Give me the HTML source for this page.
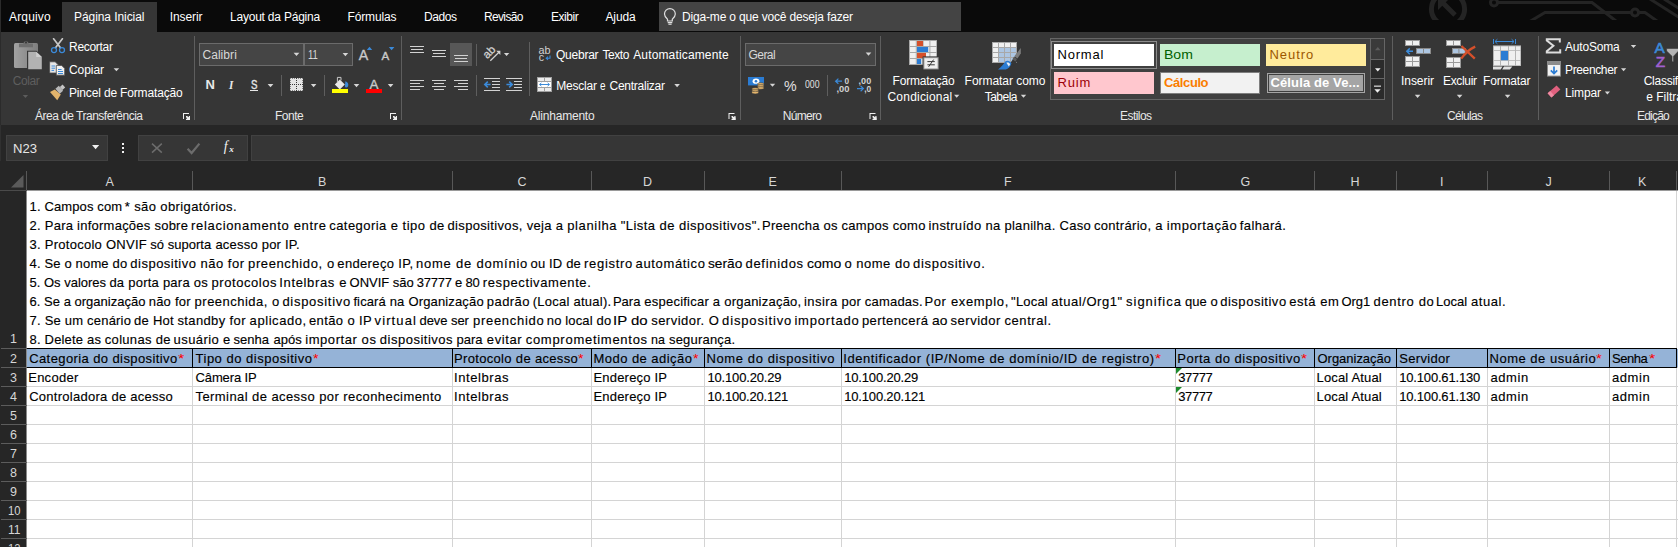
<!DOCTYPE html>
<html lang="pt-BR"><head><meta charset="utf-8"><title>Excel</title>
<style>
html,body{margin:0;padding:0;}
body{width:1678px;height:547px;overflow:hidden;position:relative;background:#262626;font-family:"Liberation Sans", sans-serif;}
.b{position:absolute;box-sizing:border-box;}
.t{position:absolute;white-space:pre;line-height:20px;height:20px;font-family:"Liberation Sans", sans-serif;}
.i{position:absolute;overflow:visible;}
</style></head><body>
<!-- backgrounds -->
<div class="b" style="left:0px;top:0px;width:1678px;height:32px;background:#0a0a0a;"></div>
<div class="b" style="left:62px;top:2px;width:95px;height:30px;background:#363636;"></div>
<div class="b" style="left:659px;top:2px;width:302px;height:29px;background:#444444;"></div>
<div class="b" style="left:0px;top:32px;width:1678px;height:93px;background:#363636;"></div>
<div class="b" style="left:0px;top:0px;width:1px;height:125px;background:#2b2b2b;"></div>
<div class="b" style="left:0px;top:125px;width:1678px;height:66px;background:#262626;"></div>
<div class="b" style="left:194px;top:36px;width:1px;height:84px;background:#5e5e5e;"></div>
<div class="b" style="left:401px;top:36px;width:1px;height:84px;background:#5e5e5e;"></div>
<div class="b" style="left:740px;top:36px;width:1px;height:84px;background:#5e5e5e;"></div>
<div class="b" style="left:880px;top:36px;width:1px;height:84px;background:#5e5e5e;"></div>
<div class="b" style="left:1392px;top:36px;width:1px;height:84px;background:#5e5e5e;"></div>
<div class="b" style="left:1538px;top:36px;width:1px;height:84px;background:#5e5e5e;"></div>
<div class="b" style="left:281px;top:75px;width:1px;height:21px;background:#5e5e5e;"></div>
<div class="b" style="left:324px;top:75px;width:1px;height:21px;background:#5e5e5e;"></div>
<div class="b" style="left:476px;top:44px;width:1px;height:22px;background:#5e5e5e;"></div>
<div class="b" style="left:476px;top:75px;width:1px;height:21px;background:#5e5e5e;"></div>
<div class="b" style="left:529px;top:42px;width:1px;height:54px;background:#5e5e5e;"></div>
<div class="b" style="left:827px;top:75px;width:1px;height:21px;background:#5e5e5e;"></div>
<div class="b" style="left:199px;top:43px;width:105px;height:23px;background:#454545;border:1px solid #6b6b6b;"></div>
<div class="b" style="left:304px;top:43px;width:49px;height:23px;background:#454545;border:1px solid #6b6b6b;"></div>
<div class="b" style="left:745px;top:43px;width:131px;height:23px;background:#454545;border:1px solid #6b6b6b;"></div>
<div class="b" style="left:450px;top:43px;width:22px;height:23px;background:#575757;"></div>
<div class="b" style="left:1050px;top:38px;width:335px;height:62px;background:#404040;border:1px solid #666666;"></div>
<div class="b" style="left:1370px;top:38px;width:15px;height:62px;background:#3a3a3a;border:1px solid #666666;"></div>
<div class="b" style="left:1371px;top:60px;width:13px;height:18px;background:#2b2b2b;"></div>
<div class="b" style="left:1371px;top:79px;width:13px;height:20px;background:#2b2b2b;"></div>
<div class="b" style="left:1370px;top:59px;width:15px;height:1px;background:#666666;"></div>
<div class="b" style="left:1370px;top:78px;width:15px;height:1px;background:#666666;"></div>
<div class="b" style="left:1051px;top:41px;width:106px;height:28px;border:1px solid #8c8c8c;"></div>
<div class="b" style="left:1054px;top:44px;width:100px;height:22px;background:#ffffff;"></div>
<div class="b" style="left:1160px;top:44px;width:100px;height:22px;background:#c6efce;"></div>
<div class="b" style="left:1266px;top:44px;width:100px;height:22px;background:#ffeb9c;"></div>
<div class="b" style="left:1054px;top:72px;width:100px;height:22px;background:#ffc7ce;"></div>
<div class="b" style="left:1160px;top:72px;width:100px;height:22px;background:#f2f2f2;border:1px solid #7f7f7f;"></div>
<div class="b" style="left:1266px;top:72px;width:100px;height:22px;background:#a5a5a5;border:3px double #3f3f3f;"></div>
<div class="b" style="left:0px;top:125px;width:1px;height:36px;background:#303030;"></div>
<div class="b" style="left:6px;top:135px;width:102px;height:26px;background:#363636;border:1px solid #414141;"></div>
<div class="b" style="left:138px;top:135px;width:110px;height:26px;background:#363636;border:1px solid #414141;"></div>
<div class="b" style="left:251px;top:135px;width:1429px;height:26px;background:#363636;border:1px solid #414141;"></div>
<div class="b" style="left:27px;top:191px;width:1651px;height:356px;background:#ffffff;"></div>
<div class="b" style="left:0px;top:190px;width:1678px;height:1px;background:#9a9a9a;"></div>
<div class="b" style="left:0px;top:190px;width:27px;height:1px;background:#4a4a4a;"></div>
<div class="b" style="left:26px;top:171px;width:1px;height:19px;background:#585858;"></div>
<div class="b" style="left:192px;top:171px;width:1px;height:19px;background:#585858;"></div>
<div class="b" style="left:452px;top:171px;width:1px;height:19px;background:#585858;"></div>
<div class="b" style="left:591px;top:171px;width:1px;height:19px;background:#585858;"></div>
<div class="b" style="left:704px;top:171px;width:1px;height:19px;background:#585858;"></div>
<div class="b" style="left:841px;top:171px;width:1px;height:19px;background:#585858;"></div>
<div class="b" style="left:1175px;top:171px;width:1px;height:19px;background:#585858;"></div>
<div class="b" style="left:1314px;top:171px;width:1px;height:19px;background:#585858;"></div>
<div class="b" style="left:1396px;top:171px;width:1px;height:19px;background:#585858;"></div>
<div class="b" style="left:1487px;top:171px;width:1px;height:19px;background:#585858;"></div>
<div class="b" style="left:1609px;top:171px;width:1px;height:19px;background:#585858;"></div>
<div class="b" style="left:1676px;top:171px;width:1px;height:19px;background:#585858;"></div>
<div class="b" style="left:0px;top:191px;width:26px;height:356px;background:#262626;"></div>
<div class="b" style="left:26px;top:191px;width:1px;height:356px;background:#8a8a8a;"></div>
<div class="b" style="left:1px;top:348px;width:26px;height:1px;background:#5c5c5c;"></div>
<div class="b" style="left:1px;top:367px;width:26px;height:1px;background:#5c5c5c;"></div>
<div class="b" style="left:1px;top:386px;width:26px;height:1px;background:#5c5c5c;"></div>
<div class="b" style="left:1px;top:405px;width:26px;height:1px;background:#5c5c5c;"></div>
<div class="b" style="left:1px;top:424px;width:26px;height:1px;background:#5c5c5c;"></div>
<div class="b" style="left:1px;top:443px;width:26px;height:1px;background:#5c5c5c;"></div>
<div class="b" style="left:1px;top:462px;width:26px;height:1px;background:#5c5c5c;"></div>
<div class="b" style="left:1px;top:481px;width:26px;height:1px;background:#5c5c5c;"></div>
<div class="b" style="left:1px;top:500px;width:26px;height:1px;background:#5c5c5c;"></div>
<div class="b" style="left:1px;top:519px;width:26px;height:1px;background:#5c5c5c;"></div>
<div class="b" style="left:1px;top:538px;width:26px;height:1px;background:#5c5c5c;"></div>
<div class="b" style="left:27px;top:367px;width:1651px;height:1px;background:#d4d4d4;"></div>
<div class="b" style="left:27px;top:386px;width:1651px;height:1px;background:#d4d4d4;"></div>
<div class="b" style="left:27px;top:405px;width:1651px;height:1px;background:#d4d4d4;"></div>
<div class="b" style="left:27px;top:424px;width:1651px;height:1px;background:#d4d4d4;"></div>
<div class="b" style="left:27px;top:443px;width:1651px;height:1px;background:#d4d4d4;"></div>
<div class="b" style="left:27px;top:462px;width:1651px;height:1px;background:#d4d4d4;"></div>
<div class="b" style="left:27px;top:481px;width:1651px;height:1px;background:#d4d4d4;"></div>
<div class="b" style="left:27px;top:500px;width:1651px;height:1px;background:#d4d4d4;"></div>
<div class="b" style="left:27px;top:519px;width:1651px;height:1px;background:#d4d4d4;"></div>
<div class="b" style="left:27px;top:538px;width:1651px;height:1px;background:#d4d4d4;"></div>
<div class="b" style="left:192px;top:368px;width:1px;height:179px;background:#d4d4d4;"></div>
<div class="b" style="left:452px;top:368px;width:1px;height:179px;background:#d4d4d4;"></div>
<div class="b" style="left:591px;top:368px;width:1px;height:179px;background:#d4d4d4;"></div>
<div class="b" style="left:704px;top:368px;width:1px;height:179px;background:#d4d4d4;"></div>
<div class="b" style="left:841px;top:368px;width:1px;height:179px;background:#d4d4d4;"></div>
<div class="b" style="left:1175px;top:368px;width:1px;height:179px;background:#d4d4d4;"></div>
<div class="b" style="left:1314px;top:368px;width:1px;height:179px;background:#d4d4d4;"></div>
<div class="b" style="left:1396px;top:368px;width:1px;height:179px;background:#d4d4d4;"></div>
<div class="b" style="left:1487px;top:368px;width:1px;height:179px;background:#d4d4d4;"></div>
<div class="b" style="left:1609px;top:368px;width:1px;height:179px;background:#d4d4d4;"></div>
<div class="b" style="left:1676px;top:368px;width:1px;height:179px;background:#d4d4d4;"></div>
<div class="b" style="left:1676px;top:191px;width:1px;height:157px;background:#d4d4d4;"></div>
<div class="b" style="left:27px;top:348px;width:1650px;height:20px;background:#000000;"></div>
<div class="b" style="left:27px;top:349px;width:165px;height:18px;background:#95b3d7;"></div>
<div class="b" style="left:193px;top:349px;width:259px;height:18px;background:#95b3d7;"></div>
<div class="b" style="left:453px;top:349px;width:138px;height:18px;background:#95b3d7;"></div>
<div class="b" style="left:592px;top:349px;width:112px;height:18px;background:#95b3d7;"></div>
<div class="b" style="left:705px;top:349px;width:136px;height:18px;background:#95b3d7;"></div>
<div class="b" style="left:842px;top:349px;width:333px;height:18px;background:#95b3d7;"></div>
<div class="b" style="left:1176px;top:349px;width:138px;height:18px;background:#95b3d7;"></div>
<div class="b" style="left:1315px;top:349px;width:81px;height:18px;background:#95b3d7;"></div>
<div class="b" style="left:1397px;top:349px;width:90px;height:18px;background:#95b3d7;"></div>
<div class="b" style="left:1488px;top:349px;width:121px;height:18px;background:#95b3d7;"></div>
<div class="b" style="left:1610px;top:349px;width:66px;height:18px;background:#95b3d7;"></div>
<div class="b" style="left:1677px;top:349px;width:1px;height:18px;background:#95b3d7;"></div>
<!-- icons -->
<svg class="i" style="left:0;top:0" width="1678" height="547" viewBox="0 0 1678 547">
<path d="M1176 368h6l-6 6z" fill="#1c8a2c" />
<path d="M1176 387h6l-6 6z" fill="#1c8a2c" />
<path d="M23.5 175v12.5h-12.5z" fill="#5a5a5a" />
<defs><clipPath id="tb"><rect x="1400" y="0" width="278" height="20"/></clipPath></defs>
<g clip-path="url(#tb)" fill="none" stroke="#242424" stroke-width="3"><circle cx="1448" cy="9" r="16.6" stroke-width="5"/><path d="M1455 15L1442 2" stroke-width="5"/><path d="M1438 -2h12l-12 12z" fill="#242424" stroke="none"/><circle cx="1494" cy="2.5" r="3.5"/><path d="M1498 2.5H1592L1616 21"/><path d="M1529 22L1545 12.5H1631"/><circle cx="1635" cy="12.5" r="3.5"/><path d="M1639 12.5H1645L1657 21"/><path d="M1650 -1L1680 18"/><path d="M1664 -1L1680 9"/></g>
<g fill="none" stroke="#e0e0e0" stroke-width="1.2"><path d="M667.5 19.2c-2-1.6-3-3-3-5.2a5.4 5.4 0 0 1 10.8 0c0 2.2-1 3.6-3 5.2v1.8h-4.8z"/><path d="M667.7 22.6h4.6"/><path d="M668.4 24.2h3.2"/></g>
<defs><linearGradient id="pg" x1="0" x2="1"><stop offset="0" stop-color="#a2a2a2"/><stop offset="1" stop-color="#7e7e7e"/></linearGradient></defs>
<rect x="14" y="43" width="24" height="25" rx="1.5" fill="url(#pg)"/>
<path d="M19 47.2v-3.2q0-0.6 0.6-0.6h3.6a2.9 2.9 0 0 1 5.6 0h3.6q0.6 0 0.6 0.6v3.2z" fill="#6e6e6e"/><circle cx="26" cy="42.6" r="1" fill="#363636"/>
<path d="M27 50.7h9.5l6.5 6v13.7h-16z" fill="#363636"/>
<path d="M28.2 51.8h8l5.6 5.2v12.3h-13.6z" fill="#b2b2b2"/><path d="M36.2 51.8v5.2h5.6z" fill="#cfcfcf"/>
<path d="M22.7 95h5.4l-2.7 3z" fill="#5c5c5c"/>
<g fill="none" stroke="#c8c8c8" stroke-width="1.7" stroke-linecap="round"><path d="M53.6 38.8L60.3 47.6"/><path d="M62.4 38.8L55.7 47.6"/></g>
<g fill="none" stroke="#3b8ad9" stroke-width="1.3"><circle cx="54" cy="50.1" r="2.5"/><circle cx="62" cy="50.1" r="2.5"/></g>
<path d="M49.6 61.8h5.6l3 3v8.2h-8.6z" fill="#e6e6e6" stroke="#4a4a4a" stroke-width="0.8"/>
<path d="M51.5 66h3.6M51.5 68.2h3.6M51.5 70.4h2.6" stroke="#3b8ad9" stroke-width="1"/>
<path d="M56.3 65.4h5.4l3 3v6.8h-8.4z" fill="#f0f0f0" stroke="#4a4a4a" stroke-width="0.8"/>
<path d="M58 69.5h3.6M58 71.5h5M58 73.5h5" stroke="#3b8ad9" stroke-width="1"/>
<path d="M113.6 68.2h5.6l-2.8 3z" fill="#d6d6d6"/>
<g transform="translate(0 1.3)"><path d="M50 90.6l4.8-2.4 6 5-3.6 5.8z" fill="#e2b46c"/><path d="M55.4 87.4l3.4-2.9 4.3 5-3.4 2.9z" fill="#b8b8b8"/><path d="M59.8 85.6l2.8-2.4 2.6 3-2.8 2.4z" fill="#c4c4c4"/></g>
<path d="M183 119v-6h6v1h-5v5z" fill="#f0f0f0"/><path d="M186 116h1.2l1.6 1.6v-1.6h1.2v4h-4v-1.2h1.6l-1.6-1.6z" fill="#f0f0f0"/><rect x="187.2" y="117.4" width="2.8" height="2.6" fill="#f0f0f0"/>
<path d="M390 119v-6h6v1h-5v5z" fill="#f0f0f0"/><path d="M393 116h1.2l1.6 1.6v-1.6h1.2v4h-4v-1.2h1.6l-1.6-1.6z" fill="#f0f0f0"/><rect x="394.2" y="117.4" width="2.8" height="2.6" fill="#f0f0f0"/>
<path d="M728.5 119v-6h6v1h-5v5z" fill="#f0f0f0"/><path d="M731.5 116h1.2l1.6 1.6v-1.6h1.2v4h-4v-1.2h1.6l-1.6-1.6z" fill="#f0f0f0"/><rect x="732.7" y="117.4" width="2.8" height="2.6" fill="#f0f0f0"/>
<path d="M869.5 119v-6h6v1h-5v5z" fill="#f0f0f0"/><path d="M872.5 116h1.2l1.6 1.6v-1.6h1.2v4h-4v-1.2h1.6l-1.6-1.6z" fill="#f0f0f0"/><rect x="873.7" y="117.4" width="2.8" height="2.6" fill="#f0f0f0"/>
<path d="M293.6 52.8h5.8l-2.9 3.2z" fill="#d6d6d6"/>
<path d="M342.6 53h5.6l-2.8 3.2z" fill="#d6d6d6"/>
<text x="358.7" y="60" font-family='Liberation Sans, sans-serif' font-size="14.2" fill="#cacaca" stroke="#cacaca" stroke-width="0.35">A</text>
<path d="M366.8 50h5.4l-2.7-3.2z" fill="#3b8ad9"/>
<text x="381.6" y="60" font-family='Liberation Sans, sans-serif' font-size="11.6" fill="#cacaca" stroke="#cacaca" stroke-width="0.35">A</text>
<path d="M388.8 47h5.6l-2.8 3.2z" fill="#3b8ad9"/>
<rect x="250" y="90" width="8" height="1" fill="#e8e8e8" />
<path d="M267.6 84h5.8l-2.9 3.2z" fill="#d6d6d6"/>
<rect x="290" y="78" width="13" height="13" fill="#e4e4e4" />
<path d="M296.5 78v13M290 84.5h13" stroke="#363636" stroke-width="1" stroke-dasharray="1 1"/>
<path d="M290.5 78v13M302.5 78v13M290 78.5h13M290 90.5h13" stroke="#363636" stroke-width="1" stroke-dasharray="1 1" opacity=".55"/>
<path d="M310.8 84h5.6l-2.8 3.2z" fill="#d6d6d6"/>
<path d="M339.8 79.4l5 5-5 5-5-5z" fill="#e8e8e8"/>
<path d="M337.4 82.6v-5.2h3.6v3" fill="none" stroke="#c8c8c8" stroke-width="1"/>
<path d="M345.4 81.2c2.2 0.6 3.4 2.6 2.8 4.6-0.3 1.2-1.2 1.8-2.2 1.6-0.9-0.2-1.3-1-1-2z" fill="#3b8ad9"/>
<rect x="332" y="89" width="16" height="4" fill="#ffff00" />
<path d="M353.7 84h5.6l-2.8 3.2z" fill="#d6d6d6"/>
<text x="369.4" y="88.6" font-family='Liberation Sans, sans-serif' font-size="13.4" fill="#cacaca" stroke="#cacaca" stroke-width="0.35">A</text>
<rect x="366" y="89" width="16" height="4" fill="#ff0000" />
<path d="M387.8 84h5.6l-2.8 3.2z" fill="#d6d6d6"/>
<rect x="410" y="46" width="14" height="1" fill="#d2d2d2" />
<rect x="411.0" y="49" width="12" height="1" fill="#d2d2d2" />
<rect x="410" y="52" width="14" height="1" fill="#d2d2d2" />
<rect x="432" y="50" width="14" height="1" fill="#d2d2d2" />
<rect x="433.0" y="53" width="12" height="1" fill="#d2d2d2" />
<rect x="432" y="56" width="14" height="1" fill="#d2d2d2" />
<rect x="454" y="55" width="14" height="1" fill="#d2d2d2" />
<rect x="455.0" y="58" width="12" height="1" fill="#d2d2d2" />
<rect x="454" y="61" width="14" height="1" fill="#d2d2d2" />
<rect x="410" y="80" width="14" height="1" fill="#d2d2d2" />
<rect x="410" y="83" width="10" height="1" fill="#d2d2d2" />
<rect x="410" y="86" width="14" height="1" fill="#d2d2d2" />
<rect x="410" y="89" width="10" height="1" fill="#d2d2d2" />
<rect x="432" y="80" width="14" height="1" fill="#d2d2d2" />
<rect x="434.0" y="83" width="10" height="1" fill="#d2d2d2" />
<rect x="432" y="86" width="14" height="1" fill="#d2d2d2" />
<rect x="434.0" y="89" width="10" height="1" fill="#d2d2d2" />
<rect x="454" y="80" width="14" height="1" fill="#d2d2d2" />
<rect x="458" y="83" width="10" height="1" fill="#d2d2d2" />
<rect x="454" y="86" width="14" height="1" fill="#d2d2d2" />
<rect x="458" y="89" width="10" height="1" fill="#d2d2d2" />
<text transform="translate(487.2 59.2) rotate(-45)" font-family='Liberation Sans, sans-serif' font-size="11.4" fill="#d2d2d2" stroke="#d2d2d2" stroke-width="0.3">ab</text>
<path d="M490.3 60.8L499.2 52" stroke="#d2d2d2" stroke-width="1.2"/><path d="M500.4 50.8v4.2l-4.2-4.2z" fill="#d2d2d2"/>
<path d="M503.9 53h5.4l-2.7 3z" fill="#d6d6d6"/>
<rect x="484" y="78" width="16" height="1" fill="#d2d2d2" />
<rect x="484" y="90" width="16" height="1" fill="#d2d2d2" />
<rect x="492" y="81" width="8" height="1" fill="#d2d2d2" />
<rect x="492" y="84" width="8" height="1" fill="#d2d2d2" />
<rect x="492" y="87" width="8" height="1" fill="#d2d2d2" />
<path d="M490.6 84.5h-5.4M487.8 81.6l-3 2.9 3 2.9" fill="none" stroke="#3b8ad9" stroke-width="1.6"/>
<rect x="506" y="78" width="16" height="1" fill="#d2d2d2" />
<rect x="506" y="90" width="16" height="1" fill="#d2d2d2" />
<rect x="514" y="81" width="8" height="1" fill="#d2d2d2" />
<rect x="514" y="84" width="8" height="1" fill="#d2d2d2" />
<rect x="514" y="87" width="8" height="1" fill="#d2d2d2" />
<path d="M506.4 84.5h5.4M509.2 81.6l3 2.9-3 2.9" fill="none" stroke="#3b8ad9" stroke-width="1.6"/>
<text x="538.6" y="53.6" font-family='Liberation Sans, sans-serif' font-size="10.6" fill="#d2d2d2" textLength="12" lengthAdjust="spacingAndGlyphs">ab</text>
<text x="538.8" y="60.8" font-family='Liberation Sans, sans-serif' font-size="10.6" fill="#d2d2d2">c</text>
<path d="M550 55.6v2.6h-3.6M548 56.6l-1.8 1.6 1.8 1.6" fill="none" stroke="#3b8ad9" stroke-width="1.1"/>
<rect x="537" y="77" width="15" height="15" fill="#a0a0a0" />
<rect x="538" y="78" width="6" height="3" fill="#ececec" />
<rect x="545" y="78" width="6" height="3" fill="#ececec" />
<rect x="538" y="88" width="6" height="3" fill="#ececec" />
<rect x="545" y="88" width="6" height="3" fill="#ececec" />
<rect x="538" y="82" width="13" height="5" fill="#ffffff" />
<path d="M539.6 84.5h9.8M541.4 82.9l-1.8 1.6 1.8 1.6M547.6 82.9l1.8 1.6-1.8 1.6" fill="none" stroke="#3b8ad9" stroke-width="1"/>
<path d="M674.3 84h5.6l-2.8 3.2z" fill="#d6d6d6"/>
<path d="M865.7 52.6h5.6l-2.8 3.2z" fill="#d6d6d6"/>
<rect x="748" y="77" width="16" height="8.4" fill="#2b7cd3" />
<ellipse cx="756" cy="81.2" rx="3.4" ry="2.6" fill="#ffffff"/><circle cx="756" cy="81.2" r="1.3" fill="#2b7cd3"/>
<ellipse cx="760.8" cy="84" rx="3.4" ry="1.3" fill="#e2b46c" stroke="#363636" stroke-width="0.5"/>
<ellipse cx="760.8" cy="86" rx="3.4" ry="1.3" fill="#e2b46c" stroke="#363636" stroke-width="0.5"/>
<ellipse cx="760.8" cy="88" rx="3.4" ry="1.3" fill="#e2b46c" stroke="#363636" stroke-width="0.5"/>
<ellipse cx="755.2" cy="89" rx="3.4" ry="1.3" fill="#e2b46c" stroke="#363636" stroke-width="0.5"/>
<ellipse cx="755.2" cy="91" rx="3.4" ry="1.3" fill="#e2b46c" stroke="#363636" stroke-width="0.5"/>
<ellipse cx="755.2" cy="92.6" rx="3.4" ry="1.3" fill="#e2b46c" stroke="#363636" stroke-width="0.5"/>
<path d="M769.8 83.8h5.4l-2.7 3z" fill="#d6d6d6"/>
<path d="M842 81.2h-6M838.4 78.6l-2.8 2.6 2.8 2.6" fill="none" stroke="#3b8ad9" stroke-width="1.2"/>
<text x="844.6" y="83.8" font-family='Liberation Sans, sans-serif' font-size="9" font-weight="bold" fill="#d2d2d2" textLength="4.6" lengthAdjust="spacingAndGlyphs">0</text>
<text x="836.4" y="92" font-family='Liberation Sans, sans-serif' font-size="9" font-weight="bold" fill="#d2d2d2" textLength="13" lengthAdjust="spacingAndGlyphs">,00</text>
<text x="858.6" y="83.8" font-family='Liberation Sans, sans-serif' font-size="9" font-weight="bold" fill="#d2d2d2" textLength="12.6" lengthAdjust="spacingAndGlyphs">,00</text>
<path d="M857 88.6h6M860.6 86l2.8 2.6-2.8 2.6" fill="none" stroke="#3b8ad9" stroke-width="1.2"/>
<text x="864.2" y="92" font-family='Liberation Sans, sans-serif' font-size="9" font-weight="bold" fill="#d2d2d2" textLength="7" lengthAdjust="spacingAndGlyphs">,0</text>
<rect x="909" y="40" width="28" height="25" fill="#a8a8a8" />
<rect x="910.0" y="41" width="5.8" height="5" fill="#f0f0f0" />
<rect x="916.8" y="41" width="5.8" height="5" fill="#f0f0f0" />
<rect x="923.6" y="41" width="5.8" height="5" fill="#f0f0f0" />
<rect x="930.4" y="41" width="5.8" height="5" fill="#f0f0f0" />
<rect x="910.0" y="47" width="5.8" height="5" fill="#f0f0f0" />
<rect x="916.8" y="47" width="5.8" height="5" fill="#f0f0f0" />
<rect x="923.6" y="47" width="5.8" height="5" fill="#f0f0f0" />
<rect x="930.4" y="47" width="5.8" height="5" fill="#f0f0f0" />
<rect x="910.0" y="53" width="5.8" height="5" fill="#f0f0f0" />
<rect x="916.8" y="53" width="5.8" height="5" fill="#f0f0f0" />
<rect x="923.6" y="53" width="5.8" height="5" fill="#f0f0f0" />
<rect x="930.4" y="53" width="5.8" height="5" fill="#f0f0f0" />
<rect x="910.0" y="59" width="5.8" height="5" fill="#f0f0f0" />
<rect x="916.8" y="59" width="5.8" height="5" fill="#f0f0f0" />
<rect x="923.6" y="59" width="5.8" height="5" fill="#f0f0f0" />
<rect x="930.4" y="59" width="5.8" height="5" fill="#f0f0f0" />
<rect x="917" y="41" width="6" height="5" fill="#d5502b" />
<rect x="917" y="47" width="11.2" height="5" fill="#2b7cd3" />
<rect x="917" y="53" width="9" height="5" fill="#d5502b" />
<rect x="917" y="59" width="4.2" height="5" fill="#2b7cd3" />
<rect x="922.6" y="56.4" width="16.8" height="13.8" fill="#363636" />
<rect x="923.4" y="57.2" width="15.2" height="12.2" fill="#9a9a9a" />
<rect x="924.4" y="58.2" width="13.2" height="10.2" fill="#efefef" />
<path d="M927.4 61.6h7.4M927.4 64.8h7.4M933.6 59.6l-5 7.2" stroke="#3a3a3a" stroke-width="1" fill="none"/>
<path d="M954 94.8h5.4l-2.7 3z" fill="#d6d6d6"/>
<rect x="992" y="42" width="25" height="21" fill="#a8a8a8" />
<rect x="993" y="43" width="5" height="4" fill="#f0f0f0" />
<rect x="999" y="43" width="5" height="4" fill="#f0f0f0" />
<rect x="1005" y="43" width="5" height="4" fill="#f0f0f0" />
<rect x="1011" y="43" width="5" height="4" fill="#f0f0f0" />
<rect x="993" y="48" width="5" height="4" fill="#f0f0f0" />
<rect x="999" y="48" width="5" height="4" fill="#adc6e2" />
<rect x="1005" y="48" width="5" height="4" fill="#adc6e2" />
<rect x="1011" y="48" width="5" height="4" fill="#adc6e2" />
<rect x="993" y="53" width="5" height="4" fill="#f0f0f0" />
<rect x="999" y="53" width="5" height="4" fill="#adc6e2" />
<rect x="1005" y="53" width="5" height="4" fill="#adc6e2" />
<rect x="1011" y="53" width="5" height="4" fill="#adc6e2" />
<rect x="993" y="58" width="5" height="4" fill="#f0f0f0" />
<rect x="999" y="58" width="5" height="4" fill="#adc6e2" />
<rect x="1005" y="58" width="5" height="4" fill="#adc6e2" />
<rect x="1011" y="58" width="5" height="4" fill="#adc6e2" />
<path d="M1010 63.6l8.4-12.4 3 -3.6v6l-6.6 12z" fill="#363636"/>
<path d="M1020.8 48v5.4l-3.4 5-3-2.2z" fill="#7c7c7c"/><path d="M1014 56.8l3 2.2-1.6 2.4-3-2.2z" fill="#5c5c5c"/>
<path d="M998 69.6c3-2.6 5.4-5.2 7.2-8.2 2.4-1.4 5.2-0.4 6.2 2-1 3.2-3.2 5.4-5.6 6.2z" fill="#2b7cd3"/><path d="M1006.4 62.8c1.6-0.6 3 0 3.8 1.4l-1.4 2.2z" fill="#e8eef6"/>
<path d="M1020.8 94.8h5.4l-2.7 3z" fill="#d6d6d6"/>
<path d="M1375 50.2h5.6l-2.8-3.2z" fill="#5c5c5c"/>
<path d="M1375 68.2h5.6l-2.8 3.2z" fill="#f0f0f0"/>
<rect x="1374" y="85.6" width="7" height="1.1" fill="#f0f0f0" />
<path d="M1374.4 89.2h6.2l-3.1 3.5z" fill="#f0f0f0"/>
<rect x="1405" y="40" width="15" height="6" fill="#9a9a9a" />
<rect x="1406" y="41" width="6" height="4" fill="#f0f0f0" />
<rect x="1413" y="41" width="6" height="4" fill="#f0f0f0" />
<rect x="1416" y="48" width="15" height="6" fill="#8a8a8a" />
<rect x="1417" y="49" width="6" height="4" fill="#adc6e2" />
<rect x="1424" y="49" width="6" height="4" fill="#adc6e2" />
<rect x="1405" y="56" width="15" height="11" fill="#9a9a9a" />
<rect x="1406" y="57" width="6" height="4" fill="#f0f0f0" />
<rect x="1413" y="57" width="6" height="4" fill="#f0f0f0" />
<rect x="1406" y="62" width="6" height="4" fill="#f0f0f0" />
<rect x="1413" y="62" width="6" height="4" fill="#f0f0f0" />
<path d="M1413 51.3h-6.4M1409.8 48.4l-3 2.9 3 2.9" fill="none" stroke="#3b8ad9" stroke-width="1.5"/>
<path d="M1414.8 94.8h5.6l-2.8 3.2z" fill="#d6d6d6"/>
<rect x="1446" y="40" width="15" height="6" fill="#9a9a9a" />
<rect x="1447" y="41" width="6" height="4" fill="#f0f0f0" />
<rect x="1454" y="41" width="6" height="4" fill="#f0f0f0" />
<rect x="1452" y="48" width="13.8" height="6" fill="#8a8a8a" />
<rect x="1453.0" y="49" width="5.4" height="4" fill="#adc6e2" />
<rect x="1459.4" y="49" width="5.4" height="4" fill="#adc6e2" />
<rect x="1446" y="57" width="15" height="11" fill="#9a9a9a" />
<rect x="1447" y="58" width="6" height="4" fill="#f0f0f0" />
<rect x="1454" y="58" width="6" height="4" fill="#f0f0f0" />
<rect x="1447" y="63" width="6" height="4" fill="#f0f0f0" />
<rect x="1454" y="63" width="6" height="4" fill="#f0f0f0" />
<path d="M1461.4 46L1474.8 58.6M1475.2 46.6C1470 49 1465.4 53 1461.2 58.6" fill="none" stroke="#d5502b" stroke-width="2.3"/>
<path d="M1456.8 94.8h5.6l-2.8 3.2z" fill="#d6d6d6"/>
<path d="M1493.5 39v5M1515.5 39v5M1495 41.5h19M1497.4 39.2l-2.4 2.3 2.4 2.3M1511.6 39.2l2.4 2.3-2.4 2.3" fill="none" stroke="#3b8ad9" stroke-width="1"/>
<rect x="1493" y="45.4" width="28" height="20.6" fill="#b4b4b4" />
<rect x="1494" y="46.4" width="6" height="3.8" fill="#efefef" />
<rect x="1501" y="46.4" width="7" height="3.8" fill="#efefef" />
<rect x="1509" y="46.4" width="6" height="3.8" fill="#efefef" />
<rect x="1516" y="46.4" width="4.2" height="3.8" fill="#efefef" />
<rect x="1494" y="51" width="6" height="9.2" fill="#efefef" />
<rect x="1501" y="51" width="7" height="9.2" fill="#efefef" />
<rect x="1509" y="51" width="6" height="9.2" fill="#efefef" />
<rect x="1516" y="51" width="4.2" height="9.2" fill="#efefef" />
<rect x="1494" y="61" width="6" height="4.2" fill="#efefef" />
<rect x="1501" y="61" width="7" height="4.2" fill="#efefef" />
<rect x="1509" y="61" width="6" height="4.2" fill="#efefef" />
<rect x="1516" y="61" width="4.2" height="4.2" fill="#efefef" />
<rect x="1501" y="51" width="7" height="9.2" fill="#2b7cd3" />
<path d="M1493 66.4h9.6l-2 3.2h-7.6z" fill="#e0e0e0"/><path d="M1504 66.4h8.4l-2.6 3.2h-7.6z" fill="#e0e0e0"/>
<path d="M1504.8 94.8h5.6l-2.8 3.2z" fill="#d6d6d6"/>
<path d="M1559.8 42.4v-3.2h-13v1.4l6.6 5.2-6.6 5.4v1.4h13.4v-3.4" fill="none" stroke="#dcdcdc" stroke-width="2" stroke-linejoin="miter"/>
<path d="M1630.8 45h5.4l-2.7 3z" fill="#d6d6d6"/>
<rect x="1547" y="61" width="14" height="15.6" fill="#8c8c8c" />
<rect x="1548" y="65" width="12" height="10.6" fill="#f2f2f2" />
<path d="M1554 66.4v7M1550.8 70.4l3.2 3.2 3.2-3.2" fill="none" stroke="#2b7cd3" stroke-width="1.7"/>
<path d="M1621 68.2h5.2l-2.6 3z" fill="#d6d6d6"/>
<path d="M1547.6 93.2l9-7.8 3.8 4.2-9 7.8z" fill="#e0607e"/><path d="M1547.6 93.2l2.6-2.2 3.8 4.2-2.6 2.2z" fill="#f08aa2"/>
<path d="M1604.8 91.4h5.2l-2.6 3z" fill="#d6d6d6"/>
<text x="1654.6" y="52.6" font-family='Liberation Sans, sans-serif' font-size="15.4" fill="#3b8ad9" stroke="#3b8ad9" stroke-width="0.6">A</text>
<text x="1655.8" y="66.6" font-family='Liberation Sans, sans-serif' font-size="15.4" fill="#a060d0" stroke="#a060d0" stroke-width="0.6">Z</text>
<path d="M1666.6 48.4h12v2.6l-5 5.2v5.6h-1.6v-5.6l-5.4-5.2z" fill="#b4b4b4" stroke="#363636" stroke-width="0.6"/>
<path d="M92 145h7.2l-3.6 4.2z" fill="#f0f0f0"/>
<rect x="122" y="143" width="2" height="2" fill="#f0f0f0" />
<rect x="122" y="147" width="2" height="2" fill="#f0f0f0" />
<rect x="122" y="151" width="2" height="2" fill="#f0f0f0" />
<path d="M152 143.6l9.8 9M161.8 143.6l-9.8 9" stroke="#6c6c6c" stroke-width="1.5" fill="none"/>
<path d="M187.6 148.8l4 4.2 7.8-9.4" stroke="#6c6c6c" stroke-width="2.2" fill="none"/>
<text x="223.8" y="151.4" font-family='Liberation Serif, serif' font-size="13.8" font-style="italic" fill="#f4f4f4">f</text>
<text x="229.2" y="151.9" font-family='Liberation Serif, serif' font-size="9" font-style="italic" font-weight="bold" fill="#f4f4f4">x</text>
</svg>
<!-- text -->
<span class="t" style="left:9.00px;top:7px;font-size:12px;color:#ffffff;letter-spacing:0.164px;">Arquivo</span>
<span class="t" style="left:74.00px;top:7px;font-size:12px;color:#ffffff;letter-spacing:-0.074px;">Página Inicial</span>
<span class="t" style="left:169.75px;top:7px;font-size:12px;color:#ffffff;letter-spacing:-0.099px;">Inserir</span>
<span class="t" style="left:230.00px;top:7px;font-size:12px;color:#ffffff;letter-spacing:-0.216px;">Layout da Página</span>
<span class="t" style="left:347.50px;top:7px;font-size:12px;color:#ffffff;letter-spacing:-0.144px;">Fórmulas</span>
<span class="t" style="left:424.00px;top:7px;font-size:12px;color:#ffffff;letter-spacing:-0.422px;">Dados</span>
<span class="t" style="left:484.00px;top:7px;font-size:12px;color:#ffffff;letter-spacing:-0.655px;">Revisão</span>
<span class="t" style="left:551.00px;top:7px;font-size:12px;color:#ffffff;letter-spacing:-0.452px;">Exibir</span>
<span class="t" style="left:605.50px;top:7px;font-size:12px;color:#ffffff;letter-spacing:-0.129px;">Ajuda</span>
<span class="t" style="left:682.00px;top:7px;font-size:12px;color:#ffffff;letter-spacing:-0.170px;">Diga-me o que você deseja fazer</span>
<span class="t" style="left:12.80px;top:71px;font-size:12px;color:#5e5e5e;letter-spacing:-0.420px;">Colar</span>
<span class="t" style="left:69.00px;top:37px;font-size:12px;color:#ffffff;letter-spacing:-0.288px;">Recortar</span>
<span class="t" style="left:69.00px;top:60px;font-size:12px;color:#ffffff;letter-spacing:-0.071px;">Copiar</span>
<span class="t" style="left:69.00px;top:83px;font-size:12px;color:#ffffff;letter-spacing:-0.161px;">Pincel de Formatação</span>
<span class="t" style="left:35.00px;top:106px;font-size:12px;color:#e8e8e8;letter-spacing:-0.505px;">Área de Transferência</span>
<span class="t" style="left:275.00px;top:106px;font-size:12px;color:#e8e8e8;letter-spacing:-0.503px;">Fonte</span>
<span class="t" style="left:530.00px;top:106px;font-size:12px;color:#e8e8e8;letter-spacing:-0.204px;">Alinhamento</span>
<span class="t" style="left:782.80px;top:106px;font-size:12px;color:#e8e8e8;letter-spacing:-0.721px;">Número</span>
<span class="t" style="left:1120.00px;top:106px;font-size:12px;color:#e8e8e8;letter-spacing:-0.557px;">Estilos</span>
<span class="t" style="left:1447.00px;top:106px;font-size:12px;color:#e8e8e8;letter-spacing:-0.670px;">Células</span>
<span class="t" style="left:1637.00px;top:106px;font-size:12px;color:#e8e8e8;letter-spacing:-0.804px;">Edição</span>
<span class="t" style="left:202.40px;top:45px;font-size:12px;color:#d8d8d8;letter-spacing:0.076px;">Calibri</span>
<span class="t" style="left:308.00px;top:45px;font-size:12px;color:#d8d8d8;transform:scaleX(0.790);transform-origin:0 0;">11</span>
<span class="t" style="left:748.50px;top:45px;font-size:12px;color:#d8d8d8;letter-spacing:-0.544px;">Geral</span>
<span class="t" style="left:205.50px;top:75px;font-size:13px;color:#e8e8e8;font-weight:bold;">N</span>
<span class="t" style="left:229.46px;top:75px;font-size:13px;color:#e8e8e8;transform:scaleX(0.857);transform-origin:0 0;font-weight:bold;font-style:italic;font-family:'Liberation Serif',serif;">I</span>
<span class="t" style="left:250.80px;top:75px;font-size:13px;color:#e8e8e8;transform:scaleX(0.744);transform-origin:0 0;-webkit-text-stroke:0.35px #e8e8e8;">S</span>
<span class="t" style="left:556.00px;top:45px;font-size:12px;color:#ffffff;letter-spacing:-0.238px;">Quebrar</span>
<span class="t" style="left:602.60px;top:45px;font-size:12px;color:#ffffff;letter-spacing:-0.477px;">Texto</span>
<span class="t" style="left:633.20px;top:45px;font-size:12px;color:#ffffff;letter-spacing:0.149px;">Automaticamente</span>
<span class="t" style="left:556.30px;top:76px;font-size:12px;color:#ffffff;letter-spacing:-0.218px;">Mesclar</span>
<span class="t" style="left:600.20px;top:76px;font-size:12px;color:#ffffff;transform:scaleX(0.829);transform-origin:0 0;">e</span>
<span class="t" style="left:609.50px;top:76px;font-size:12px;color:#ffffff;letter-spacing:-0.252px;">Centralizar</span>
<span class="t" style="left:784.40px;top:76px;font-size:15px;color:#e0e0e0;transform:scaleX(0.946);transform-origin:0 0;">%</span>
<span class="t" style="left:804.60px;top:74px;font-size:10.5px;color:#e0e0e0;transform:scaleX(0.831);transform-origin:0 0;">000</span>
<span class="t" style="left:892.60px;top:71px;font-size:12px;color:#ffffff;letter-spacing:-0.206px;">Formatação</span>
<span class="t" style="left:887.50px;top:87px;font-size:12px;color:#ffffff;letter-spacing:0.206px;">Condicional</span>
<span class="t" style="left:964.60px;top:71px;font-size:12px;color:#ffffff;letter-spacing:-0.040px;">Formatar como</span>
<span class="t" style="left:984.70px;top:87px;font-size:12px;color:#ffffff;letter-spacing:-0.518px;">Tabela</span>
<span class="t" style="left:1057.60px;top:45px;font-size:13px;color:#000000;letter-spacing:0.759px;">Normal</span>
<span class="t" style="left:1163.52px;top:45px;font-size:13px;color:#006100;transform:scaleX(1.080);transform-origin:0 0;">Bom</span>
<span class="t" style="left:1269.50px;top:45px;font-size:13px;color:#9c5700;letter-spacing:0.942px;">Neutro</span>
<span class="t" style="left:1057.60px;top:73px;font-size:13px;color:#9c0006;letter-spacing:0.765px;">Ruim</span>
<span class="t" style="left:1164.10px;top:73px;font-size:13px;color:#fa7d00;letter-spacing:-0.419px;font-weight:bold;">Cálculo</span>
<span class="t" style="left:1270.50px;top:73px;font-size:13px;color:#ffffff;letter-spacing:0.120px;font-weight:bold;">Célula de Ve...</span>
<span class="t" style="left:1401.00px;top:71px;font-size:12px;color:#ffffff;letter-spacing:-0.057px;">Inserir</span>
<span class="t" style="left:1443.00px;top:71px;font-size:12px;color:#ffffff;letter-spacing:-0.335px;">Excluir</span>
<span class="t" style="left:1483.00px;top:71px;font-size:12px;color:#ffffff;letter-spacing:-0.168px;">Formatar</span>
<span class="t" style="left:1565.00px;top:37px;font-size:12px;color:#ffffff;letter-spacing:-0.194px;">AutoSoma</span>
<span class="t" style="left:1565.00px;top:60px;font-size:12px;color:#ffffff;letter-spacing:-0.359px;">Preencher</span>
<span class="t" style="left:1565.00px;top:83px;font-size:12px;color:#ffffff;letter-spacing:-0.137px;">Limpar</span>
<span class="t" style="left:1643.70px;top:71px;font-size:12px;color:#ffffff;letter-spacing:-0.255px;">Classificar</span>
<span class="t" style="left:1646.20px;top:87px;font-size:12px;color:#ffffff;letter-spacing:0.016px;">e Filtrar</span>
<span class="t" style="left:12.70px;top:139px;font-size:12.5px;color:#e6e6e6;transform:scaleX(1.046);transform-origin:0 0;">N23</span>
<span class="t" style="left:105.50px;top:172px;font-size:12.5px;color:#d6d6d6;">A</span>
<span class="t" style="left:318.00px;top:172px;font-size:12.5px;color:#d6d6d6;">B</span>
<span class="t" style="left:517.50px;top:172px;font-size:12.5px;color:#d6d6d6;">C</span>
<span class="t" style="left:643.00px;top:172px;font-size:12.5px;color:#d6d6d6;">D</span>
<span class="t" style="left:768.50px;top:172px;font-size:12.5px;color:#d6d6d6;">E</span>
<span class="t" style="left:1004.00px;top:172px;font-size:12.5px;color:#d6d6d6;">F</span>
<span class="t" style="left:1240.50px;top:172px;font-size:12.5px;color:#d6d6d6;">G</span>
<span class="t" style="left:1350.50px;top:172px;font-size:12.5px;color:#d6d6d6;">H</span>
<span class="t" style="left:1440.00px;top:172px;font-size:12.5px;color:#d6d6d6;">I</span>
<span class="t" style="left:1545.50px;top:172px;font-size:12.5px;color:#d6d6d6;">J</span>
<span class="t" style="left:1638.00px;top:172px;font-size:12.5px;color:#d6d6d6;">K</span>
<span class="t" style="left:10.00px;top:329px;font-size:12.5px;color:#d6d6d6;">1</span>
<span class="t" style="left:10.00px;top:349px;font-size:12.5px;color:#d6d6d6;">2</span>
<span class="t" style="left:10.00px;top:368px;font-size:12.5px;color:#d6d6d6;">3</span>
<span class="t" style="left:10.00px;top:387px;font-size:12.5px;color:#d6d6d6;">4</span>
<span class="t" style="left:10.00px;top:406px;font-size:12.5px;color:#d6d6d6;">5</span>
<span class="t" style="left:10.00px;top:425px;font-size:12.5px;color:#d6d6d6;">6</span>
<span class="t" style="left:10.00px;top:444px;font-size:12.5px;color:#d6d6d6;">7</span>
<span class="t" style="left:10.00px;top:463px;font-size:12.5px;color:#d6d6d6;">8</span>
<span class="t" style="left:10.00px;top:482px;font-size:12.5px;color:#d6d6d6;">9</span>
<span class="t" style="left:7.50px;top:501px;font-size:12.5px;color:#d6d6d6;transform:scaleX(0.896);transform-origin:0 0;">10</span>
<span class="t" style="left:7.50px;top:520px;font-size:12.5px;color:#d6d6d6;transform:scaleX(0.960);transform-origin:0 0;">11</span>
<span class="t" style="left:7.50px;top:539px;font-size:12.5px;color:#d6d6d6;transform:scaleX(0.896);transform-origin:0 0;">12</span>
<span class="t" style="left:29.60px;top:197px;font-size:13px;color:#000000;letter-spacing:0.125px;-webkit-text-stroke:0.14px currentColor;">1. Campos com</span>
<span class="t" style="left:124.70px;top:197px;font-size:13px;color:#000000;letter-spacing:0.396px;-webkit-text-stroke:0.14px currentColor;">* são obrigatórios.</span>
<span class="t" style="left:29.60px;top:216px;font-size:13px;color:#000000;letter-spacing:0.244px;-webkit-text-stroke:0.14px currentColor;">2. Para informações sobre</span>
<span class="t" style="left:191.10px;top:216px;font-size:13px;color:#000000;letter-spacing:0.674px;-webkit-text-stroke:0.14px currentColor;">relacionamento entre</span>
<span class="t" style="left:329.20px;top:216px;font-size:13px;color:#000000;letter-spacing:0.454px;-webkit-text-stroke:0.14px currentColor;">categoria e tipo de</span>
<span class="t" style="left:447.50px;top:216px;font-size:13px;color:#000000;letter-spacing:0.338px;-webkit-text-stroke:0.14px currentColor;">dispositivos, veja a</span>
<span class="t" style="left:567.20px;top:216px;font-size:13px;color:#000000;letter-spacing:0.645px;-webkit-text-stroke:0.14px currentColor;">planilha</span>
<span class="t" style="left:620.70px;top:216px;font-size:13px;color:#000000;letter-spacing:0.454px;-webkit-text-stroke:0.14px currentColor;">&quot;Lista de dispositivos&quot;.</span>
<span class="t" style="left:762.10px;top:216px;font-size:13px;color:#000000;letter-spacing:0.251px;-webkit-text-stroke:0.14px currentColor;">Preencha os</span>
<span class="t" style="left:841.50px;top:216px;font-size:13px;color:#000000;letter-spacing:0.301px;-webkit-text-stroke:0.14px currentColor;">campos como</span>
<span class="t" style="left:928.60px;top:216px;font-size:13px;color:#000000;letter-spacing:0.336px;-webkit-text-stroke:0.14px currentColor;">instruído na</span>
<span class="t" style="left:1004.40px;top:216px;font-size:13px;color:#000000;letter-spacing:0.303px;-webkit-text-stroke:0.14px currentColor;">planilha. Caso</span>
<span class="t" style="left:1093.90px;top:216px;font-size:13px;color:#000000;letter-spacing:0.327px;-webkit-text-stroke:0.14px currentColor;">contrário, a</span>
<span class="t" style="left:1166.70px;top:216px;font-size:13px;color:#000000;letter-spacing:0.625px;-webkit-text-stroke:0.14px currentColor;">importação</span>
<span class="t" style="left:1239.80px;top:216px;font-size:13px;color:#000000;letter-spacing:0.379px;-webkit-text-stroke:0.14px currentColor;">falhará.</span>
<span class="t" style="left:29.60px;top:235px;font-size:13px;color:#000000;letter-spacing:0.261px;-webkit-text-stroke:0.14px currentColor;">3. Protocolo ONVIF</span>
<span class="t" style="left:150.20px;top:235px;font-size:13px;color:#000000;letter-spacing:0.036px;-webkit-text-stroke:0.14px currentColor;">só suporta</span>
<span class="t" style="left:215.40px;top:235px;font-size:13px;color:#000000;letter-spacing:0.215px;-webkit-text-stroke:0.14px currentColor;">acesso por IP.</span>
<span class="t" style="left:29.60px;top:254px;font-size:13px;color:#000000;letter-spacing:0.152px;-webkit-text-stroke:0.14px currentColor;">4. Se o nome do</span>
<span class="t" style="left:130.30px;top:254px;font-size:13px;color:#000000;letter-spacing:0.497px;-webkit-text-stroke:0.14px currentColor;">dispositivo não for</span>
<span class="t" style="left:248.10px;top:254px;font-size:13px;color:#000000;letter-spacing:0.604px;-webkit-text-stroke:0.14px currentColor;">preenchido, o</span>
<span class="t" style="left:337.30px;top:254px;font-size:13px;color:#000000;letter-spacing:0.352px;-webkit-text-stroke:0.14px currentColor;">endereço IP,</span>
<span class="t" style="left:416.00px;top:254px;font-size:13px;color:#000000;letter-spacing:0.777px;-webkit-text-stroke:0.14px currentColor;">nome de domínio</span>
<span class="t" style="left:530.50px;top:254px;font-size:13px;color:#000000;letter-spacing:0.169px;-webkit-text-stroke:0.14px currentColor;">ou ID de</span>
<span class="t" style="left:584.00px;top:254px;font-size:13px;color:#000000;letter-spacing:0.712px;-webkit-text-stroke:0.14px currentColor;">registro</span>
<span class="t" style="left:635.50px;top:254px;font-size:13px;color:#000000;letter-spacing:0.649px;-webkit-text-stroke:0.14px currentColor;">automático</span>
<span class="t" style="left:708.10px;top:254px;font-size:13px;color:#000000;transform:scaleX(1.053);transform-origin:0 0;-webkit-text-stroke:0.14px currentColor;">serão</span>
<span class="t" style="left:745.50px;top:254px;font-size:13px;color:#000000;letter-spacing:0.695px;-webkit-text-stroke:0.14px currentColor;">definidos</span>
<span class="t" style="left:807.00px;top:254px;font-size:13px;color:#000000;transform:scaleX(1.077);transform-origin:0 0;-webkit-text-stroke:0.14px currentColor;">como</span>
<span class="t" style="left:844.40px;top:254px;font-size:13px;color:#000000;letter-spacing:0.512px;-webkit-text-stroke:0.14px currentColor;">o nome do</span>
<span class="t" style="left:913.10px;top:254px;font-size:13px;color:#000000;letter-spacing:0.673px;-webkit-text-stroke:0.14px currentColor;">dispositivo.</span>
<span class="t" style="left:29.60px;top:273px;font-size:13px;color:#000000;letter-spacing:-0.015px;-webkit-text-stroke:0.14px currentColor;">5. Os valores da</span>
<span class="t" style="left:128.20px;top:273px;font-size:13px;color:#000000;letter-spacing:0.241px;-webkit-text-stroke:0.14px currentColor;">porta para os</span>
<span class="t" style="left:211.60px;top:273px;font-size:13px;color:#000000;letter-spacing:0.536px;-webkit-text-stroke:0.14px currentColor;">protocolos</span>
<span class="t" style="left:279.30px;top:273px;font-size:13px;color:#000000;letter-spacing:0.643px;-webkit-text-stroke:0.14px currentColor;">Intelbras e</span>
<span class="t" style="left:349.60px;top:273px;font-size:13px;color:#000000;letter-spacing:-0.033px;-webkit-text-stroke:0.14px currentColor;">ONVIF são</span>
<span class="t" style="left:416.80px;top:273px;font-size:13px;color:#000000;letter-spacing:-0.248px;-webkit-text-stroke:0.14px currentColor;">37777 e 80</span>
<span class="t" style="left:482.80px;top:273px;font-size:13px;color:#000000;letter-spacing:0.601px;-webkit-text-stroke:0.14px currentColor;">respectivamente.</span>
<span class="t" style="left:29.60px;top:292px;font-size:13px;color:#000000;letter-spacing:0.016px;-webkit-text-stroke:0.14px currentColor;">6. Se a organização</span>
<span class="t" style="left:148.70px;top:292px;font-size:13px;color:#000000;letter-spacing:0.226px;-webkit-text-stroke:0.14px currentColor;">não for</span>
<span class="t" style="left:194.60px;top:292px;font-size:13px;color:#000000;letter-spacing:0.487px;-webkit-text-stroke:0.14px currentColor;">preenchida, o</span>
<span class="t" style="left:282.40px;top:292px;font-size:13px;color:#000000;letter-spacing:0.713px;-webkit-text-stroke:0.14px currentColor;">dispositivo</span>
<span class="t" style="left:353.40px;top:292px;font-size:13px;color:#000000;letter-spacing:0.121px;-webkit-text-stroke:0.14px currentColor;">ficará na</span>
<span class="t" style="left:408.40px;top:292px;font-size:13px;color:#000000;letter-spacing:0.152px;-webkit-text-stroke:0.14px currentColor;">Organização</span>
<span class="t" style="left:486.80px;top:292px;font-size:13px;color:#000000;letter-spacing:0.450px;-webkit-text-stroke:0.14px currentColor;">padrão</span>
<span class="t" style="left:532.70px;top:292px;font-size:13px;color:#000000;letter-spacing:0.251px;-webkit-text-stroke:0.14px currentColor;">(Local atual).</span>
<span class="t" style="left:612.91px;top:292px;font-size:13px;color:#000000;-webkit-text-stroke:0.14px currentColor;">Para</span>
<span class="t" style="left:644.30px;top:292px;font-size:13px;color:#000000;letter-spacing:0.229px;-webkit-text-stroke:0.14px currentColor;">especificar a</span>
<span class="t" style="left:724.20px;top:292px;font-size:13px;color:#000000;letter-spacing:0.234px;-webkit-text-stroke:0.14px currentColor;">organização,</span>
<span class="t" style="left:804.00px;top:292px;font-size:13px;color:#000000;letter-spacing:0.453px;-webkit-text-stroke:0.14px currentColor;">insira</span>
<span class="t" style="left:841.50px;top:292px;font-size:13px;color:#000000;letter-spacing:0.214px;-webkit-text-stroke:0.14px currentColor;">por camadas.</span>
<span class="t" style="left:924.40px;top:292px;font-size:13px;color:#000000;letter-spacing:0.666px;-webkit-text-stroke:0.14px currentColor;">Por exemplo,</span>
<span class="t" style="left:1011.10px;top:292px;font-size:13px;color:#000000;letter-spacing:0.179px;-webkit-text-stroke:0.14px currentColor;">&quot;Local</span>
<span class="t" style="left:1051.20px;top:292px;font-size:13px;color:#000000;letter-spacing:0.570px;-webkit-text-stroke:0.14px currentColor;">atual/Org1&quot;</span>
<span class="t" style="left:1126.00px;top:292px;font-size:13px;color:#000000;letter-spacing:0.995px;-webkit-text-stroke:0.14px currentColor;">significa</span>
<span class="t" style="left:1185.10px;top:292px;font-size:13px;color:#000000;-webkit-text-stroke:0.14px currentColor;">que o</span>
<span class="t" style="left:1220.20px;top:292px;font-size:13px;color:#000000;letter-spacing:0.523px;-webkit-text-stroke:0.14px currentColor;">dispositivo</span>
<span class="t" style="left:1289.30px;top:292px;font-size:13px;color:#000000;letter-spacing:0.548px;-webkit-text-stroke:0.14px currentColor;">está em</span>
<span class="t" style="left:1341.40px;top:292px;font-size:13px;color:#000000;-webkit-text-stroke:0.14px currentColor;">Org1</span>
<span class="t" style="left:1373.50px;top:292px;font-size:13px;color:#000000;letter-spacing:0.675px;-webkit-text-stroke:0.14px currentColor;">dentro do</span>
<span class="t" style="left:1435.99px;top:292px;font-size:13px;color:#000000;-webkit-text-stroke:0.14px currentColor;">Local</span>
<span class="t" style="left:1470.90px;top:292px;font-size:13px;color:#000000;letter-spacing:0.582px;-webkit-text-stroke:0.14px currentColor;">atual.</span>
<span class="t" style="left:29.60px;top:311px;font-size:13px;color:#000000;letter-spacing:0.204px;-webkit-text-stroke:0.14px currentColor;">7. Se um cenário</span>
<span class="t" style="left:134.10px;top:311px;font-size:13px;color:#000000;letter-spacing:0.242px;-webkit-text-stroke:0.14px currentColor;">de Hot</span>
<span class="t" style="left:177.40px;top:311px;font-size:13px;color:#000000;letter-spacing:0.381px;-webkit-text-stroke:0.14px currentColor;">standby for</span>
<span class="t" style="left:249.60px;top:311px;font-size:13px;color:#000000;letter-spacing:0.572px;-webkit-text-stroke:0.14px currentColor;">aplicado,</span>
<span class="t" style="left:309.00px;top:311px;font-size:13px;color:#000000;letter-spacing:0.389px;-webkit-text-stroke:0.14px currentColor;">então o IP</span>
<span class="t" style="left:374.50px;top:311px;font-size:13px;color:#000000;letter-spacing:1.135px;-webkit-text-stroke:0.14px currentColor;">virtual</span>
<span class="t" style="left:419.50px;top:311px;font-size:13px;color:#000000;letter-spacing:-0.062px;-webkit-text-stroke:0.14px currentColor;">deve ser</span>
<span class="t" style="left:473.00px;top:311px;font-size:13px;color:#000000;letter-spacing:0.700px;-webkit-text-stroke:0.14px currentColor;">preenchido</span>
<span class="t" style="left:546.80px;top:311px;font-size:13px;color:#000000;letter-spacing:0.145px;-webkit-text-stroke:0.14px currentColor;">no local do</span>
<span class="t" style="left:613.15px;top:311px;font-size:13px;color:#000000;transform:scaleX(1.150);transform-origin:0 0;-webkit-text-stroke:0.14px currentColor;">IP do</span>
<span class="t" style="left:651.20px;top:311px;font-size:13px;color:#000000;letter-spacing:0.476px;-webkit-text-stroke:0.14px currentColor;">servidor. O</span>
<span class="t" style="left:722.10px;top:311px;font-size:13px;color:#000000;letter-spacing:0.843px;-webkit-text-stroke:0.14px currentColor;">dispositivo</span>
<span class="t" style="left:794.40px;top:311px;font-size:13px;color:#000000;letter-spacing:0.815px;-webkit-text-stroke:0.14px currentColor;">importado</span>
<span class="t" style="left:861.90px;top:311px;font-size:13px;color:#000000;letter-spacing:0.431px;-webkit-text-stroke:0.14px currentColor;">pertencerá</span>
<span class="t" style="left:932.10px;top:311px;font-size:13px;color:#000000;transform:scaleX(1.061);transform-origin:0 0;-webkit-text-stroke:0.14px currentColor;">ao</span>
<span class="t" style="left:950.60px;top:311px;font-size:13px;color:#000000;letter-spacing:0.499px;-webkit-text-stroke:0.14px currentColor;">servidor</span>
<span class="t" style="left:1004.40px;top:311px;font-size:13px;color:#000000;letter-spacing:0.597px;-webkit-text-stroke:0.14px currentColor;">central.</span>
<span class="t" style="left:29.60px;top:330px;font-size:13px;color:#000000;letter-spacing:0.175px;-webkit-text-stroke:0.14px currentColor;">8. Delete as</span>
<span class="t" style="left:104.80px;top:330px;font-size:13px;color:#000000;letter-spacing:0.306px;-webkit-text-stroke:0.14px currentColor;">colunas de</span>
<span class="t" style="left:173.60px;top:330px;font-size:13px;color:#000000;letter-spacing:0.406px;-webkit-text-stroke:0.14px currentColor;">usuário e</span>
<span class="t" style="left:233.50px;top:330px;font-size:13px;color:#000000;-webkit-text-stroke:0.14px currentColor;">senha</span>
<span class="t" style="left:273.60px;top:330px;font-size:13px;color:#000000;-webkit-text-stroke:0.14px currentColor;">após</span>
<span class="t" style="left:305.20px;top:330px;font-size:13px;color:#000000;letter-spacing:0.568px;-webkit-text-stroke:0.14px currentColor;">importar os</span>
<span class="t" style="left:379.80px;top:330px;font-size:13px;color:#000000;letter-spacing:0.509px;-webkit-text-stroke:0.14px currentColor;">dispositivos</span>
<span class="t" style="left:456.50px;top:330px;font-size:13px;color:#000000;-webkit-text-stroke:0.14px currentColor;">para</span>
<span class="t" style="left:486.80px;top:330px;font-size:13px;color:#000000;letter-spacing:0.608px;-webkit-text-stroke:0.14px currentColor;">evitar</span>
<span class="t" style="left:525.70px;top:330px;font-size:13px;color:#000000;letter-spacing:0.724px;-webkit-text-stroke:0.14px currentColor;">comprometimentos</span>
<span class="t" style="left:651.00px;top:330px;font-size:13px;color:#000000;transform:scaleX(0.959);transform-origin:0 0;-webkit-text-stroke:0.14px currentColor;">na</span>
<span class="t" style="left:669.00px;top:330px;font-size:13px;color:#000000;letter-spacing:0.188px;-webkit-text-stroke:0.14px currentColor;">segurança.</span>
<span class="t" style="left:29.20px;top:349px;font-size:13px;color:#000000;letter-spacing:0.404px;-webkit-text-stroke:0.14px currentColor;">Categoria do dispositivo</span>
<span class="t" style="left:177.80px;top:349px;font-size:13px;color:#ff0000;transform:scaleX(1.240);transform-origin:0 0;">*</span>
<span class="t" style="left:195.50px;top:349px;font-size:13px;color:#000000;letter-spacing:0.516px;-webkit-text-stroke:0.14px currentColor;">Tipo do dispositivo</span>
<span class="t" style="left:312.55px;top:349px;font-size:13px;color:#ff0000;transform:scaleX(1.090);transform-origin:0 0;">*</span>
<span class="t" style="left:454.00px;top:349px;font-size:13px;color:#000000;letter-spacing:0.330px;-webkit-text-stroke:0.14px currentColor;">Protocolo de acesso</span>
<span class="t" style="left:578.30px;top:349px;font-size:13px;color:#ff0000;transform:scaleX(1.090);transform-origin:0 0;">*</span>
<span class="t" style="left:593.50px;top:349px;font-size:13px;color:#000000;letter-spacing:0.459px;-webkit-text-stroke:0.14px currentColor;">Modo de adição</span>
<span class="t" style="left:692.55px;top:349px;font-size:13px;color:#ff0000;transform:scaleX(1.090);transform-origin:0 0;">*</span>
<span class="t" style="left:706.50px;top:349px;font-size:13px;color:#000000;letter-spacing:0.607px;-webkit-text-stroke:0.14px currentColor;">Nome do dispositivo</span>
<span class="t" style="left:843.25px;top:349px;font-size:13px;color:#000000;letter-spacing:0.575px;-webkit-text-stroke:0.14px currentColor;">Identificador (IP/Nome de domínio/ID de registro)</span>
<span class="t" style="left:1154.55px;top:349px;font-size:13px;color:#ff0000;transform:scaleX(1.190);transform-origin:0 0;">*</span>
<span class="t" style="left:1177.25px;top:349px;font-size:13px;color:#000000;letter-spacing:0.501px;-webkit-text-stroke:0.14px currentColor;">Porta do dispositivo</span>
<span class="t" style="left:1300.80px;top:349px;font-size:13px;color:#ff0000;transform:scaleX(1.190);transform-origin:0 0;">*</span>
<span class="t" style="left:1317.50px;top:349px;font-size:13px;color:#000000;letter-spacing:-0.023px;-webkit-text-stroke:0.14px currentColor;">Organização</span>
<span class="t" style="left:1399.25px;top:349px;font-size:13px;color:#000000;letter-spacing:0.310px;-webkit-text-stroke:0.14px currentColor;">Servidor</span>
<span class="t" style="left:1489.50px;top:349px;font-size:13px;color:#000000;letter-spacing:0.517px;-webkit-text-stroke:0.14px currentColor;">Nome de usuário</span>
<span class="t" style="left:1596.30px;top:349px;font-size:13px;color:#ff0000;transform:scaleX(1.140);transform-origin:0 0;">*</span>
<span class="t" style="left:1612.00px;top:349px;font-size:13px;color:#000000;letter-spacing:-0.465px;-webkit-text-stroke:0.14px currentColor;">Senha</span>
<span class="t" style="left:1649.30px;top:349px;font-size:13px;color:#ff0000;transform:scaleX(1.240);transform-origin:0 0;">*</span>
<span class="t" style="left:28.20px;top:368px;font-size:13px;color:#000000;letter-spacing:0.268px;-webkit-text-stroke:0.14px currentColor;">Encoder</span>
<span class="t" style="left:195.50px;top:368px;font-size:13px;color:#000000;letter-spacing:-0.120px;-webkit-text-stroke:0.14px currentColor;">Câmera IP</span>
<span class="t" style="left:454.00px;top:368px;font-size:13px;color:#000000;letter-spacing:0.580px;-webkit-text-stroke:0.14px currentColor;">Intelbras</span>
<span class="t" style="left:593.50px;top:368px;font-size:13px;color:#000000;letter-spacing:0.188px;-webkit-text-stroke:0.14px currentColor;">Endereço IP</span>
<span class="t" style="left:707.50px;top:368px;font-size:13px;color:#000000;letter-spacing:-0.175px;-webkit-text-stroke:0.14px currentColor;">10.100.20.29</span>
<span class="t" style="left:844.25px;top:368px;font-size:13px;color:#000000;letter-spacing:-0.175px;-webkit-text-stroke:0.14px currentColor;">10.100.20.29</span>
<span class="t" style="left:1178.25px;top:368px;font-size:13px;color:#000000;letter-spacing:-0.417px;-webkit-text-stroke:0.14px currentColor;">37777</span>
<span class="t" style="left:1316.50px;top:368px;font-size:13px;color:#000000;letter-spacing:0.157px;-webkit-text-stroke:0.14px currentColor;">Local Atual</span>
<span class="t" style="left:1399.25px;top:368px;font-size:13px;color:#000000;letter-spacing:-0.180px;-webkit-text-stroke:0.14px currentColor;">10.100.61.130</span>
<span class="t" style="left:1490.50px;top:368px;font-size:13px;color:#000000;letter-spacing:0.581px;-webkit-text-stroke:0.14px currentColor;">admin</span>
<span class="t" style="left:1612.00px;top:368px;font-size:13px;color:#000000;letter-spacing:0.581px;-webkit-text-stroke:0.14px currentColor;">admin</span>
<span class="t" style="left:29.20px;top:387px;font-size:13px;color:#000000;letter-spacing:0.267px;-webkit-text-stroke:0.14px currentColor;">Controladora de acesso</span>
<span class="t" style="left:195.50px;top:387px;font-size:13px;color:#000000;letter-spacing:0.423px;-webkit-text-stroke:0.14px currentColor;">Terminal de acesso por reconhecimento</span>
<span class="t" style="left:454.00px;top:387px;font-size:13px;color:#000000;letter-spacing:0.580px;-webkit-text-stroke:0.14px currentColor;">Intelbras</span>
<span class="t" style="left:593.50px;top:387px;font-size:13px;color:#000000;letter-spacing:0.188px;-webkit-text-stroke:0.14px currentColor;">Endereço IP</span>
<span class="t" style="left:707.50px;top:387px;font-size:13px;color:#000000;letter-spacing:-0.200px;-webkit-text-stroke:0.14px currentColor;">10.100.20.121</span>
<span class="t" style="left:844.25px;top:387px;font-size:13px;color:#000000;letter-spacing:-0.180px;-webkit-text-stroke:0.14px currentColor;">10.100.20.121</span>
<span class="t" style="left:1178.25px;top:387px;font-size:13px;color:#000000;letter-spacing:-0.417px;-webkit-text-stroke:0.14px currentColor;">37777</span>
<span class="t" style="left:1316.50px;top:387px;font-size:13px;color:#000000;letter-spacing:0.157px;-webkit-text-stroke:0.14px currentColor;">Local Atual</span>
<span class="t" style="left:1399.25px;top:387px;font-size:13px;color:#000000;letter-spacing:-0.180px;-webkit-text-stroke:0.14px currentColor;">10.100.61.130</span>
<span class="t" style="left:1490.50px;top:387px;font-size:13px;color:#000000;letter-spacing:0.581px;-webkit-text-stroke:0.14px currentColor;">admin</span>
<span class="t" style="left:1612.00px;top:387px;font-size:13px;color:#000000;letter-spacing:0.581px;-webkit-text-stroke:0.14px currentColor;">admin</span>
</body></html>
